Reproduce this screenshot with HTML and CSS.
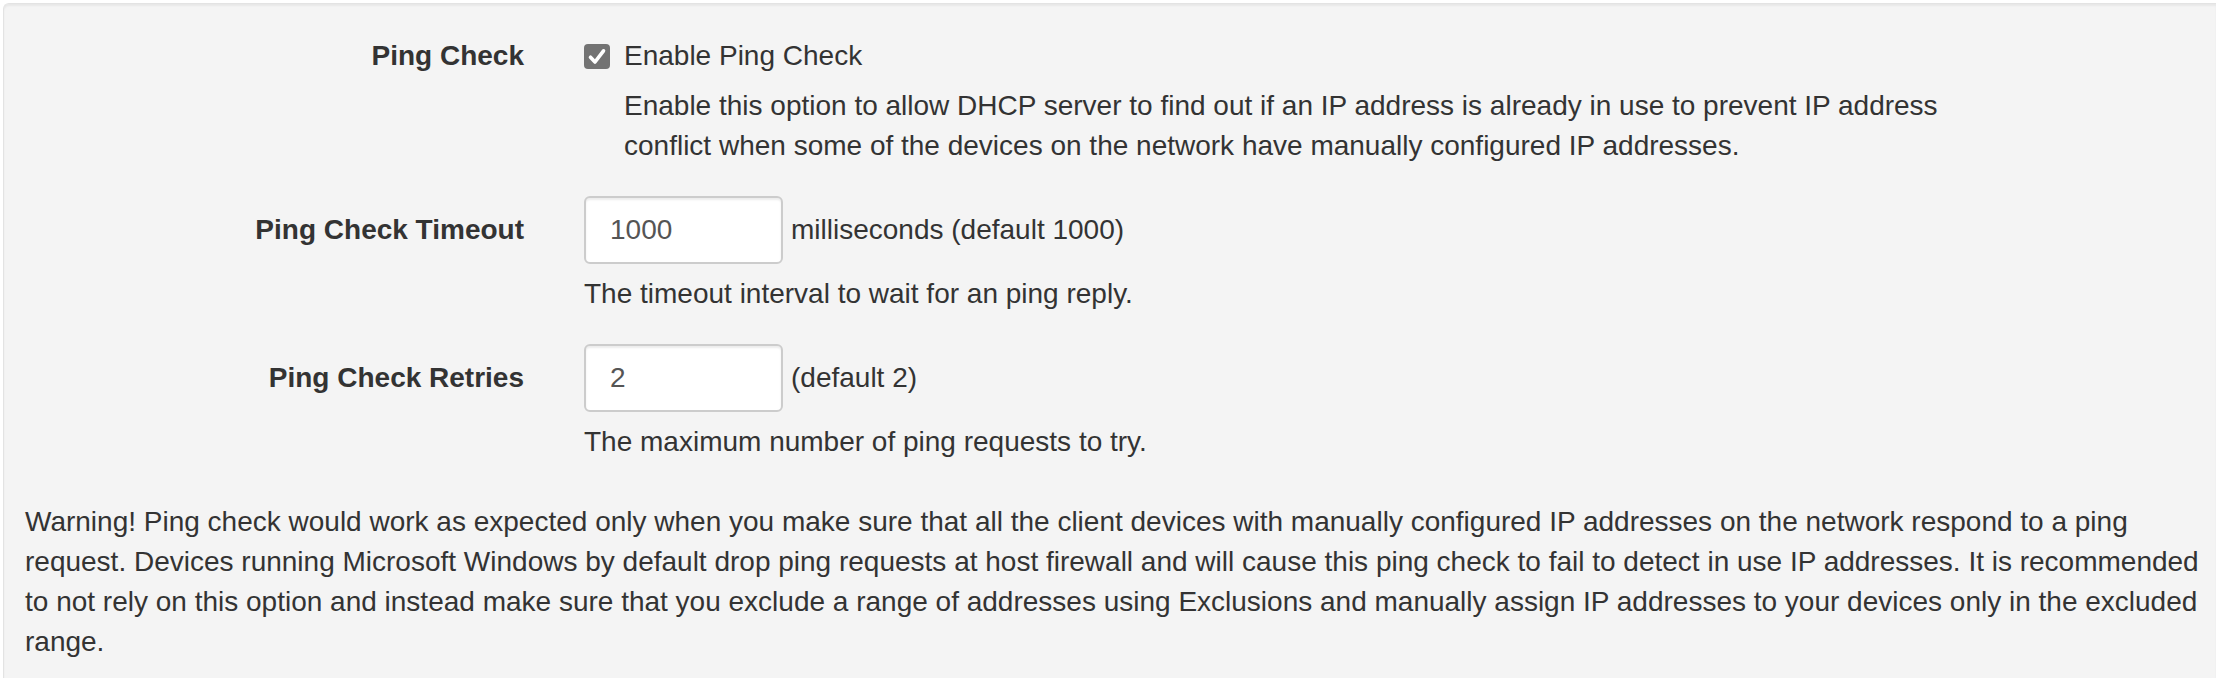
FILE: index.html
```html
<!DOCTYPE html>
<html lang="en">
<head>
<meta charset="utf-8">
<title>Ping Check</title>
<link rel="stylesheet" href="styles.css">
</head>
<body>
<div class="well">
  <div class="form-group checkbox-group">
    <div class="label">Ping Check</div>
    <div class="control">
      <label class="check">
        <span class="box"><svg viewBox="0 0 26 25" width="26" height="25"><path d="M6.5 13.2 L11 18 L19.5 6.8" fill="none" stroke="#fff" stroke-width="3.6" stroke-linecap="round" stroke-linejoin="round"/></svg></span>
        Enable Ping Check
      </label>
      <p class="help indent">Enable this option to allow DHCP server to find out if an IP address is already in use to prevent IP address conflict when some of the devices on the network have manually configured IP addresses.</p>
    </div>
  </div>
  <div class="form-group">
    <div class="label">Ping Check Timeout</div>
    <div class="control">
      <div class="input-row">
        <div class="input">1000</div>
        <span class="unit">milliseconds (default 1000)</span>
      </div>
      <p class="help">The timeout interval to wait for an ping reply.</p>
    </div>
  </div>
  <div class="form-group">
    <div class="label">Ping Check Retries</div>
    <div class="control">
      <div class="input-row">
        <div class="input">2</div>
        <span class="unit">(default 2)</span>
      </div>
      <p class="help">The maximum number of ping requests to try.</p>
    </div>
  </div>
  <p class="warning">Warning! Ping check would work as expected only when you make sure that all the client devices with manually configured IP addresses on the network respond to a ping request. Devices running Microsoft Windows by default drop ping requests at host firewall and will cause this ping check to fail to detect in use IP addresses. It is recommended to not rely on this option and instead make sure that you exclude a range of addresses using Exclusions and manually assign IP addresses to your devices only in the excluded range.</p>
</div>
</body>
</html>
```
FILE: styles.css
```css
html, body {
  margin: 0;
  padding: 0;
  background: #fff;
  height: 678px;
  overflow: hidden;
}
body {
  font-family: "Liberation Sans", Arial, sans-serif;
  font-size: 28px;
  line-height: 40px;
  color: #333;
}
.well {
  box-sizing: border-box;
  height: 675px;
  margin: 3px 0 0 3px;
  background: #f4f4f4;
  border: 1px solid #e3e3e3;
  border-right: none;
  border-bottom: none;
  border-radius: 6px 0 0 0;
  box-shadow: inset 0 2px 2px rgba(0, 0, 0, 0.05);
  padding: 18px 0 0 21px;
}
.form-group {
  display: flex;
  margin-bottom: 30px;
}
.label {
  width: 499px;
  flex: none;
  text-align: right;
  font-weight: bold;
  padding-top: 14px;
}
.control {
  margin-left: 60px;
  width: 1400px;
}
.check {
  display: flex;
  align-items: center;
  padding-top: 14px;
}
.box {
  width: 26px;
  height: 25px;
  background: #737373;
  border-radius: 4px;
  margin-right: 14px;
  display: flex;
}
.help {
  margin: 10px 0 0;
}
.indent {
  padding-left: 40px;
  max-width: 1340px;
}
.input-row {
  display: flex;
  align-items: center;
}
.input {
  box-sizing: border-box;
  width: 199px;
  height: 68px;
  border: 2px solid #ccc;
  border-radius: 6px;
  background: #fff;
  color: #555;
  padding: 12px 24px;
  box-shadow: inset 0 2px 2px rgba(0, 0, 0, 0.075);
}
.unit {
  margin-left: 8px;
}
.warning {
  margin: 40px 0 0;
  padding-right: 14px;
}
```
